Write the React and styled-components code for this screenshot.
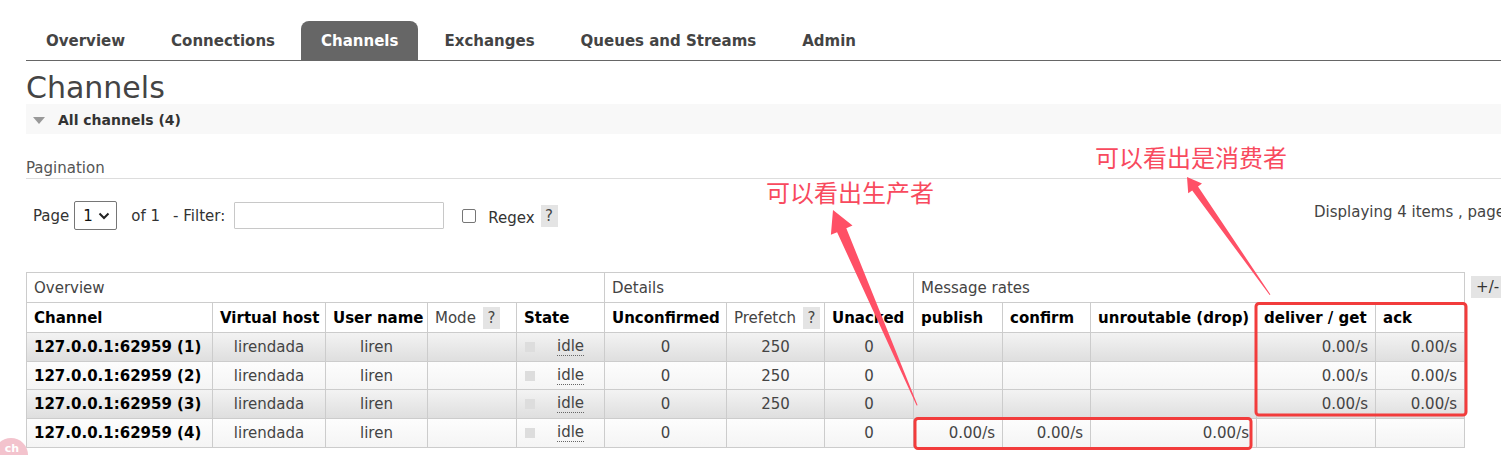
import React from "react";
import styled, { createGlobalStyle } from "styled-components";

const GlobalStyle = createGlobalStyle`
  html, body { margin: 0; padding: 0; background: #fff; overflow: hidden; }
  body { font-family: "DejaVu Sans", Verdana, sans-serif; color: #444; }
  * { box-sizing: border-box; }
`;

const Screen = styled.div`
  position: relative;
  width: 1501px;
  height: 455px;
  overflow: hidden;
`;

const Page = styled.div`
  width: 1580px;
  padding-left: 26px;
`;

const Nav = styled.nav`
  display: flex;
  align-items: flex-end;
  height: 40px;
  margin-top: 21px;
  border-bottom: 1px solid #666;
`;

const Tab = styled.a`
  display: block;
  padding: 0 20px;
  margin-right: 6px;
  height: 39px;
  line-height: 40px;
  overflow: hidden;
  font-size: 15px;
  font-weight: bold;
  text-decoration: none;
  color: ${(p) => (p.$active ? "#fff" : "#444")};
  background: ${(p) => (p.$active ? "#666" : "transparent")};
  border-radius: 8px 8px 0 0;
`;

const Title = styled.h1`
  margin: 10px 0 0;
  font-size: 30px;
  line-height: 33px;
  font-weight: normal;
  color: #444;
`;

const SectionHeader = styled.div`
  display: flex;
  align-items: center;
  gap: 13px;
  height: 30px;
  padding: 2px 0 0 7px;
  background: #f8f8f8;
  font-size: 14px;
  font-weight: bold;
  color: #333;
`;

const Triangle = styled.span`
  width: 0;
  height: 0;
  border-left: 6px solid transparent;
  border-right: 6px solid transparent;
  border-top: 7px solid #999;
`;

const SubLabel = styled.div`
  margin-top: 22px;
  height: 23px;
  line-height: 24px;
  font-size: 15px;
  color: #555;
  border-bottom: 1px solid #ddd;
`;

const PagerRow = styled.div`
  display: grid;
  grid-template-columns: 1281px max-content;
  align-items: center;
  margin-top: 22px;
  height: 29px;
  padding-left: 7px;
  font-size: 15px;
  color: #333;
`;

const PagerLeft = styled.div`
  display: flex;
  align-items: center;
  white-space: nowrap;
`;

const Text = styled.span`
  margin-left: ${(p) => p.$ml || 0}px;
  margin-top: ${(p) => p.$mt || 0}px;
`;

const SelectBox = styled.div`
  display: flex;
  align-items: center;
  justify-content: space-between;
  margin-left: 5px;
  width: 43px;
  height: 29px;
  padding: 0 6px 0 8px;
  border: 1px solid #767676;
  border-radius: 2px;
  color: #111;
`;

const FilterInput = styled.input`
  margin-left: 9px;
  width: 210px;
  height: 27px;
  border: 1px solid #c8c8c8;
  border-radius: 1px;
  outline: none;
`;

const CheckBox = styled.span`
  display: inline-block;
  margin-left: 18px;
  width: 14px;
  height: 14px;
  border: 1px solid #767676;
  border-radius: 2px;
  background: #fff;
`;

const Help = styled.span`
  display: inline-flex;
  align-items: center;
  justify-content: center;
  margin-left: ${(p) => p.$ml || 6}px;
  width: 17px;
  height: 22px;
  background: #e4e4e4;
  font-weight: normal;
  color: #444;
  font-size: 15px;
`;

const Displaying = styled.span`
  white-space: nowrap;
  margin-top: -7px;
  color: #444;
`;

const TableArea = styled.div`
  display: flex;
  align-items: flex-start;
  gap: 6px;
  margin-top: 42px;
`;

const Table = styled.table`
  border-collapse: collapse;
  table-layout: fixed;
  width: 1439px;
  font-size: 15px;
`;

const GroupTh = styled.th`
  height: 30px;
  padding: 0 7px;
  border: 1px solid #ccc;
  text-align: left;
  font-weight: normal;
  color: #444;
  background: #fff;
`;

const Th = styled.th`
  height: 30px;
  padding: 0 7px;
  border: 1px solid #ccc;
  text-align: left;
  white-space: nowrap;
  overflow: hidden;
  font-weight: ${(p) => (p.$plain ? "normal" : "bold")};
  color: ${(p) => (p.$plain ? "#444" : "#000")};
  background: #fff;
`;

const HeadInner = styled.span`
  display: inline-flex;
  align-items: center;
`;

const Tr = styled.tr`
  background: ${(p) =>
    p.$alt
      ? "linear-gradient(to bottom, #f3f3f3 0%, #dedede 100%)"
      : "linear-gradient(to bottom, #fdfdfd 0%, #f4f4f4 100%)"};
`;

const Td = styled.td`
  height: 28.7px;
  padding: 0 7px;
  border: 1px solid #ccc;
  white-space: nowrap;
  overflow: hidden;
  text-align: ${(p) => p.$align || "left"};
  font-weight: ${(p) => (p.$bold ? "bold" : "normal")};
  color: ${(p) => (p.$bold ? "#000" : "#444")};
`;

const StateCell = styled.span`
  display: flex;
  align-items: center;
  gap: 22px;
  padding-left: 1px;
`;

const StateSquare = styled.span`
  width: 10px;
  height: 10px;
  background: #ddd;
`;

const Abbr = styled.abbr`
  text-decoration: none;
  border-bottom: 1px dotted #666;
  line-height: 17px;
`;

const ToggleButton = styled.span`
  margin-top: 4px;
  height: 22px;
  padding: 0 5px;
  line-height: 22px;
  background: #e4e4e4;
  font-size: 15px;
  color: #333;
  white-space: nowrap;
`;

const Overlay = styled.svg`
  position: absolute;
  left: 0;
  top: 0;
  pointer-events: none;
`;

const Note = styled.span`
  position: absolute;
  left: ${(p) => p.$x}px;
  top: ${(p) => p.$y}px;
  font-family: "Noto Sans CJK SC", "Noto Sans", sans-serif;
  font-size: 24px;
  line-height: 26px;
  color: #f84a5e;
  white-space: nowrap;
`;

const Bubble = styled.div`
  position: absolute;
  left: -6px;
  top: 438px;
  width: 34px;
  height: 34px;
  border-radius: 50%;
  background: #f3c3cd;
  color: #fff;
  font-size: 11px;
  font-weight: bold;
  text-align: right;
  padding: 4px 9px 0 0;
`;

const cols = [186, 113, 102, 89, 88, 122, 98, 89, 89, 88, 166, 119, 89];

const rows = [
  { n: 1, pre: "250", rates: ["", "", "", "0.00/s", "0.00/s"] },
  { n: 2, pre: "250", rates: ["", "", "", "0.00/s", "0.00/s"] },
  { n: 3, pre: "250", rates: ["", "", "", "0.00/s", "0.00/s"] },
  { n: 4, pre: "", rates: ["0.00/s", "0.00/s", "0.00/s", "", ""] },
];

const tabs = ["Overview", "Connections", "Channels", "Exchanges", "Queues and Streams", "Admin"];

function Chevron() {
  return (
    <svg width="12" height="8" viewBox="0 0 12 8">
      <path d="M1.5 1.5 L6 6 L10.5 1.5" fill="none" stroke="#222" strokeWidth="2" />
    </svg>
  );
}

export default function App() {
  return (
    <Screen>
      <GlobalStyle />
      <Page>
        <Nav>
          {tabs.map((t) => (
            <Tab key={t} $active={t === "Channels"}>
              {t}
            </Tab>
          ))}
        </Nav>
        <Title>Channels</Title>
        <SectionHeader>
          <Triangle />
          <span>All channels (4)</span>
        </SectionHeader>
        <SubLabel>Pagination</SubLabel>
        <PagerRow>
          <PagerLeft>
            <Text>Page</Text>
            <SelectBox>
              <span>1</span>
              <Chevron />
            </SelectBox>
            <Text $ml={14}>of 1</Text>
            <Text $ml={13}>- Filter:</Text>
            <FilterInput type="text" />
            <CheckBox />
            <Text $ml={12} $mt={4}>Regex</Text>
            <Help $ml={6}>?</Help>
          </PagerLeft>
          <Displaying>Displaying 4 items , page 1 of 1</Displaying>
        </PagerRow>
        <TableArea>
          <Table>
            <colgroup>
              {cols.map((w, i) => (
                <col key={i} style={{ width: w }} />
              ))}
            </colgroup>
            <thead>
              <tr>
                <GroupTh colSpan={5}>Overview</GroupTh>
                <GroupTh colSpan={3}>Details</GroupTh>
                <GroupTh colSpan={5}>Message rates</GroupTh>
              </tr>
              <tr>
                <Th>Channel</Th>
                <Th>Virtual host</Th>
                <Th>User name</Th>
                <Th $plain>
                  <HeadInner>
                    Mode<Help $ml={7}>?</Help>
                  </HeadInner>
                </Th>
                <Th>State</Th>
                <Th>Unconfirmed</Th>
                <Th $plain>
                  <HeadInner>
                    Prefetch<Help $ml={7}>?</Help>
                  </HeadInner>
                </Th>
                <Th>Unacked</Th>
                <Th>publish</Th>
                <Th>confirm</Th>
                <Th>unroutable (drop)</Th>
                <Th>deliver / get</Th>
                <Th>ack</Th>
              </tr>
            </thead>
            <tbody>
              {rows.map((r) => (
                <Tr key={r.n} $alt={r.n % 2 === 1}>
                  <Td $bold>127.0.0.1:62959 ({r.n})</Td>
                  <Td $align="center">lirendada</Td>
                  <Td $align="center">liren</Td>
                  <Td />
                  <Td>
                    <StateCell>
                      <StateSquare />
                      <Abbr>idle</Abbr>
                    </StateCell>
                  </Td>
                  <Td $align="center">0</Td>
                  <Td $align="center">{r.pre}</Td>
                  <Td $align="center">0</Td>
                  {r.rates.map((v, i) => (
                    <Td key={i} $align="right">
                      {v}
                    </Td>
                  ))}
                </Tr>
              ))}
            </tbody>
          </Table>
          <ToggleButton>+/-</ToggleButton>
        </TableArea>
      </Page>

      <Overlay width="1501" height="455" viewBox="0 0 1501 455">
        <rect x="915" y="418.5" width="336" height="30" rx="3" fill="none" stroke="#f23c3c" strokeWidth="3" />
        <rect x="1256" y="303.5" width="210" height="111.5" rx="3" fill="none" stroke="#f23c3c" strokeWidth="3" />
        <polygon
          fill="#ff5066"
          points="833,210 852.5,225.6 846.3,228.2 917.6,405.2 916.6,405.6 837.1,232.2 830.9,234.8"
        />
        <polygon
          fill="#ff5066"
          points="1187,177 1202,183.5 1198,186.4 1270.4,294.5 1269.6,295 1192.2,190.4 1188.2,193.3"
        />
      </Overlay>
      <Note $x={766} $y={179}>可以看出生产者</Note>
      <Note $x={1095} $y={144}>可以看出是消费者</Note>
      <Bubble>ch</Bubble>
    </Screen>
  );
}
